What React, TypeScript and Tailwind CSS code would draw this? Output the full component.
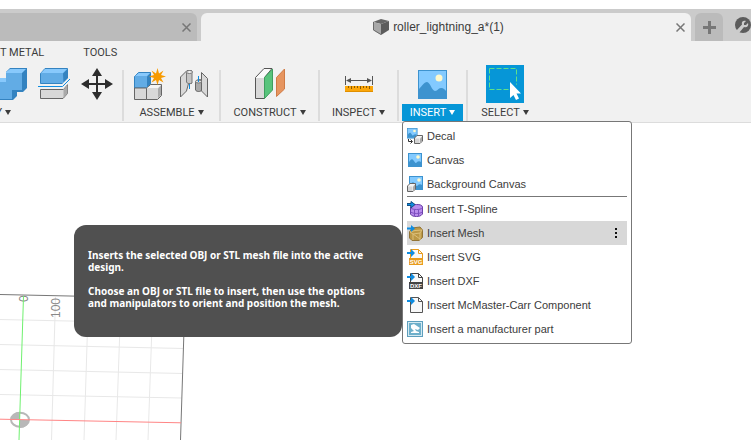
import type { ReactNode } from 'react';
import { clsx } from 'clsx';

type IconProps = { className?: string };

function PictureIcon({ className }: IconProps) {
  return (
    <svg className={className} viewBox="0 0 29 29" fill="none">
      <rect x="0.5" y="0.5" width="28" height="28" fill="#83caff" stroke="#3d93cf" />
      <circle cx="21" cy="8" r="3.5" fill="#fdf9cd" />
      <path d="M1 19C4 16 6 12 9 12s5 9 8 9 3-3 6-3 4 2 5 3v7H1z" fill="#3d93cf" />
    </svg>
  );
}

function CombineIcon() {
  return (
    <svg className="h-8 w-7" viewBox="0 0 28 32">
      <path d="M0 14V10H6V4L10 0H27V20L23 24H17V28L13 32H0z" fill="#3483c0" />
      <path d="M0 14H6V5H22V22H12V31H0z" fill="#62ace5" />
      <path d="M6 4L10 1H26L22 5H6zM0 10H6V14H0z" fill="#88c9fc" />
    </svg>
  );
}

function SplitIcon() {
  return (
    <svg className="size-8" viewBox="0 0 32 32" fill="none">
      <path d="M2.500 5.500L7 .500H29.500V11L26 15.500H2.500z" fill="#62ace5" stroke="#3483c0" />
      <path d="M3 5L7 1H29L25 5z" fill="#88c9fc" />
      <path d="M25 5.500L29.500 1V11L25.500 15.500z" fill="#3483c0" />
      <path d="M2.500 21.500H25.500L29.500 16.500V25.500L25 30.500H2.500z" fill="#d8d8d8" stroke="#666" />
      <path d="M25.500 21.500L29.500 17V25.500L25.500 30z" fill="#aaa" />
      <path d="M0 18.500H24.500L32 11" stroke="#f1f1f1" strokeWidth="4" />
      <path d="M0 18.500H24.500L32 11" stroke="#0f8ce0" />
    </svg>
  );
}

function MoveIcon() {
  return (
    <svg className="h-8 w-[34px]" viewBox="0 0 32 32" fill="#2d2d2d">
      <path d="M15 6h2v9h9v2h-9v9h-2v-9H6v-2h9z" />
      <path d="M16 0L21 8H11zM16 32L11 24H21zM0 16L8 11V21zM32 16L24 21V11z" />
    </svg>
  );
}

function NewComponentIcon() {
  return (
    <svg className="size-8" viewBox="0 0 32 32" fill="none">
      <path d="M.5 8.500L4.500 4.500H16.500V16L12.500 20H.5z" fill="#62ace5" stroke="#3483c0" />
      <path d="M1 8L5 5H16L13 8z" fill="#88c9fc" />
      <path d="M13 8.500L16.500 5V16L13 19.500z" fill="#3483c0" />
      <path d="M.5 20H12.500V31.500H.5z" fill="#d8d8d8" stroke="#666" />
      <path d="M12.500 20.500L16.500 16.500H27.500V27.500L23.500 31.500H12.500z" fill="#d8d8d8" stroke="#666" />
      <path d="M13 20L17 17H27L24 20z" fill="#f5f5f5" />
      <path d="M24 20.500L27 17.500V27L24 30z" fill="#aaa" />
      <path
        d="M23.500 0L25 5.500L29.500 2.500L27 7L32 8.500L27 10L29.500 14.500L25 12L23.500 17L22 12L17.500 14.500L20 10L15 8.500L20 7L17.500 2.500L22 5.500z"
        fill="#f79a00"
      />
    </svg>
  );
}

function JointIcon() {
  return (
    <svg className="size-8" viewBox="0 0 32 32" fill="none" stroke="#666">
      <path d="M2.500 9L9 2.500H13.500V15.500H10.500L8.500 23L2.500 29z" fill="#d8d8d8" />
      <path d="M8.500 5V14C9 16 12.500 16 14 15V4C14 2 9 2 8.500 5z" fill="#c4c4c4" stroke="#777" />
      <ellipse cx="11.500" cy="4" rx="3" ry="1.500" fill="#f1f1f1" stroke="#777" />
      <path d="M23.500 4.500L29.500 10.500V29L23.500 23z" fill="#d8d8d8" />
      <path d="M17.500 14V22C18.500 24 23 24 23.500 22V12C21 11 18.500 12 17.500 14z" fill="#aaa" />
      <ellipse cx="20.500" cy="13.500" rx="3" ry="1.500" fill="#ddd" stroke="#777" />
      <path d="M11.500 16V21M20.500 8V14" stroke="#0f8ce0" />
    </svg>
  );
}

function PlaneIcon() {
  return (
    <svg className="size-8" viewBox="0 0 32 32" fill="none">
      <path d="M1.500 9.500L10 .500H18L10.500 9.500V30.500H1.500z" fill="#fafafa" stroke="#555" />
      <path d="M2 10H10V30H2z" fill="#d8d8d8" />
      <path d="M10.500 9.500L18.500 1V22L10.500 30.500z" fill="#58c47c" stroke="#3f9e5f" />
      <path d="M22.500 9.500L30.500 1V21L22.500 28.500z" fill="#e69560" stroke="#d07b45" />
    </svg>
  );
}

function MeasureIcon() {
  return (
    <svg className="size-8" viewBox="0 0 32 32" fill="none">
      <path d="M2.500 8V17M29.500 8V17M4 12.500H28" stroke="#555" />
      <path d="M3 12.500L8 10V15zM29 12.500L24 10V15z" fill="#555" />
      <rect x="2" y="18" width="28" height="6" fill="#fba60a" />
      <path d="M5.500 18v2M8.500 18v3M11.500 18v2M14.500 18v2M17.500 18v3M20.500 18v2M23.500 18v2M26.500 18v3" stroke="#8a5a00" />
      <path d="M2 23.500H30" stroke="#e08f00" />
    </svg>
  );
}

function SelectIcon() {
  return (
    <svg className="size-[38px] bg-[#0696d7]" viewBox="0 0 38 38" fill="none">
      <rect x="3.500" y="3.500" width="27" height="21" stroke="#5fe08a" strokeDasharray="5 2" />
      <path d="M23 15V35H36V27L27 15z" fill="#0696d7" />
      <path d="M24 17V33L27.500 30L30 35L33 33.500L30.500 28.500H35z" fill="#fff" />
    </svg>
  );
}

function CubeIcon() {
  return (
    <svg className="size-4" viewBox="0 0 16 16">
      <path d="M0 3L8 0L16 2L8 5z" fill="#666" />
      <path d="M0 3L8 5V16L0 11z" fill="#a8a8a8" />
      <path d="M8 5L16 2V11L8 16z" fill="#5c5c5c" />
      <path d="M.5 3V11L8 15.500" stroke="#6a6a6a" fill="none" />
    </svg>
  );
}

function WrenchIcon() {
  return (
    <svg className="size-4" viewBox="0 0 16 16">
      <circle cx="8" cy="8" r="8" fill="#5c5c5c" />
      <path
        d="M1 14L7 7.500C6 4.500 8.500 3 11 4L9 6V8H11L13 6C14 9 12 11 9 10L4 16z"
        fill="#cbcbcb"
      />
    </svg>
  );
}

function CloseIcon() {
  return (
    <svg className="size-[9px]" viewBox="0 0 9 9" stroke="#777" strokeWidth="1.500">
      <path d="M.5 .5L8.500 8.500M8.500 .5L.5 8.500" />
    </svg>
  );
}

function MiniPicture() {
  return (
    <>
      <rect x="0.500" y="0.500" width="13" height="13" fill="#83caff" stroke="#3d93cf" />
      <circle cx="10" cy="4" r="1.800" fill="#fdf9cd" />
      <path d="M1 9C3 6 4 5 6 8S8 10 9 9s3-1 4 0v4H1z" fill="#3d93cf" />
    </>
  );
}

function SmallCube() {
  return (
    <>
      <path d="M.5 3L3 .5H8.500V6L6 8.500H.5z" fill="#f5f5f5" stroke="#666" />
      <path d="M1 3.500H5.500V8H1z" fill="#d4d4d4" />
      <path d="M6 3.500L8 1.500V6L6 8z" fill="#aaa" />
    </>
  );
}

function BlueArrow() {
  return <path d="M0 3H4V0L8 4L4 8V5H0z" fill="#0f8ce0" />;
}

function MenuIcon({ children }: { children: ReactNode }) {
  return (
    <svg className="size-4 shrink-0" viewBox="0 0 16 16" fill="none">
      {children}
    </svg>
  );
}

function FileShape({ color = '#555' }: { color?: string }) {
  return (
    <>
      <path d="M3.500 .5H11.500L15.500 4.500V15.500H3.500z" fill="#f8f8f8" stroke={color} />
      <path d="M11.500 .5V4.500H15.500" stroke={color} />
    </>
  );
}

function FileTag({ color, label }: { color: string; label: string }) {
  return (
    <>
      <FileShape color={color} />
      <rect x="2" y="9" width="14" height="7" fill={color} />
      <text x="9" y="15" fontSize="6" fontWeight="bold" textAnchor="middle" fill="#fff" fontFamily="Liberation Sans, sans-serif">
        {label}
      </text>
      <BlueArrow />
    </>
  );
}

const menuItems: { label: string; icon: ReactNode }[] = [
  {
    label: 'Decal',
    icon: (
      <>
        <g transform="scale(.75)"><MiniPicture /></g>
        <g transform="translate(7 7)"><SmallCube /></g>
        <path d="M1.500 11V13.500H5M3.500 11.500L5.500 13.500L3.500 15.500" stroke="#333" />
      </>
    ),
  },
  { label: 'Canvas', icon: <g transform="translate(1 1)"><MiniPicture /></g> },
  {
    label: 'Background Canvas',
    icon: (
      <>
        <g transform="translate(2 0)"><MiniPicture /></g>
        <g transform="translate(0 7)"><SmallCube /></g>
      </>
    ),
  },
  {
    label: 'Insert T-Spline',
    icon: (
      <>
        <path d="M3.500 6C4 4 6 3.500 9.500 3.500S15 4 15.500 6V13C14 15 12 15.500 9.500 15.500S4.500 15 3.500 13z" fill="#b98cec" stroke="#6a3fa5" />
        <path d="M3.500 7C6 9 13 9 15.500 7M3.500 11C6 13 13 13 15.500 11M7.500 8.500V15M11.500 8.500V15" stroke="#7d4fc0" />
        <path d="M0 2.500H4V.5L8 3.500L4 7V4.500H0z" fill="#0f8ce0" stroke="#174f80" />
      </>
    ),
  },
  {
    label: 'Insert Mesh',
    icon: (
      <>
        <path d="M2.500 7L5 3L13 2L15.500 5V12.500L12 15.500H5L2.500 13z" fill="#bb9846" stroke="#927436" />
        <path d="M3 7L8 5.500L15 5M6 9L13 8L15 5M6 9V15M13 8V15M6 9L13 14M3 7L6 9" stroke="#dcc07a" />
        <path d="M0 2.500H4V0L8 3.500L4 7V4.500H0z" fill="#0f8ce0" />
      </>
    ),
  },
  { label: 'Insert SVG', icon: <FileTag color="#e89b1c" label="SVG" /> },
  { label: 'Insert DXF', icon: <FileTag color="#444" label="DXF" /> },
  { label: 'Insert McMaster-Carr Component', icon: <><FileShape /><BlueArrow /></> },
  {
    label: 'Insert a manufacturer part',
    icon: (
      <>
        <rect x="0.500" y="0.500" width="15" height="15" fill="#d5eaf2" stroke="#5e9fbd" />
        <rect x="2" y="2" width="12" height="12" fill="#6fb0cb" />
        <path d="M4 4L7 3L13 7L11 9L8 8L9 10L12 11V12H4V11L7 10L4 7z" fill="#fff" />
      </>
    ),
  },
];

function Caret() {
  return (
    <svg className="h-[5px] w-1.5 shrink-0" viewBox="0 0 6 5" fill="currentColor">
      <path d="M0 0H6L3 5z" />
    </svg>
  );
}

function ToolGroup({ label, active, className, children, menu }: {
  label: string;
  active?: boolean;
  className?: string;
  children: ReactNode;
  menu?: ReactNode;
}) {
  return (
    <div className={clsx('flex shrink-0 flex-col items-center gap-px', className)}>
      <div className="flex h-[38px] items-center justify-center gap-3">{children}</div>
      <div className="relative">
        <button
          className={clsx(
            'flex h-[17px] items-center justify-center gap-[3px] whitespace-nowrap',
            active && 'w-[61px] bg-[#0696d7] text-white'
          )}
        >
          <span className="pt-0.5">{label}</span>
          <Caret />
        </button>
        {menu}
      </div>
    </div>
  );
}

function Divider() {
  return <div className="h-[51px] w-0.5 shrink-0 self-end bg-[#dcdcdc]" />;
}

function Tooltip() {
  return (
    <div
      role="tooltip"
      className="absolute right-full top-[103px] mr-px flex h-28 w-[328px] flex-col justify-center gap-3 rounded-xl bg-[#505050] pb-1 pl-3.5 pr-6 font-['Noto_Sans',sans-serif] text-[10px] font-bold leading-3 text-white"
    >
      <p>Inserts the selected OBJ or STL mesh file into the active design.</p>
      <p>Choose an OBJ or STL file to insert, then use the options and manipulators to orient and position the mesh.</p>
    </div>
  );
}

function InsertMenu() {
  return (
    <div className="absolute left-0 top-full z-10 w-[230px] rounded-[3px] border border-[#777] bg-white px-1 py-0.5 font-['Liberation_Sans',Arial,sans-serif] text-[#3c3c3c]">
      <ul>
        {menuItems.map(({ label, icon }, i) => (
          <li key={label} className={clsx(i === 3 && 'border-t border-[#777]')}>
            <button
              className={clsx(
                'flex h-6 w-full items-center gap-1 whitespace-nowrap text-left',
                label === 'Insert Mesh' && 'bg-[#d8d8d8]'
              )}
            >
              <MenuIcon>{icon}</MenuIcon>
              <span className="grow">{label}</span>
              {label === 'Insert Mesh' && (
                <svg className="mr-2.5 h-3 w-0.5" viewBox="0 0 2 12" fill="#111">
                  <path d="M0 1h2v2H0zM0 5h2v2H0zM0 9h2v2H0z" />
                </svg>
              )}
            </button>
          </li>
        ))}
      </ul>
      <Tooltip />
    </div>
  );
}

function Viewport() {
  return (
    <svg className="h-[317px] w-[200px]" viewBox="0 123 200 317" fill="none">
      <g stroke="#e8e8e8">
        <path d="M0 319.500L184 323.500M0 344.500L183.500 348.500M0 369.500L182.500 373.500M0 394.500L181.500 398" />
        <path d="M55.500 297L51.500 440M88.500 297L84 440M121 297L116 440M153 297L148 440" />
      </g>
      <path d="M0 294.500L185 298.500L180.500 440" stroke="#777" />
      <g fill="#888" fontFamily="Liberation Sans, sans-serif" fontSize="12">
        <text transform="translate(28 302) rotate(-90)">0</text>
        <text transform="translate(60 318) rotate(-90)">100</text>
      </g>
      <ellipse cx="20" cy="419.700" rx="9" ry="7" fill="#fff" stroke="#b8b8b8" strokeWidth="2" />
      <path d="M20 420V412A9 8 0 0 0 11 420zM20 420V428A9 8 0 0 0 29 420z" fill="#b8b8b8" />
      <path d="M23.500 296L19 440" stroke="#6ff06f" />
      <path d="M0 419.200L181 422.800" stroke="#ff8585" />
    </svg>
  );
}

export default function App() {
  return (
    <div className="min-h-screen overflow-hidden bg-white pt-[9px] font-['Liberation_Sans',Arial,sans-serif] text-[11px] text-[#3c3c3c]">
      <header className="flex h-8 gap-1 bg-[#cbcbcb] pt-1">
        <div className="flex w-[197px] items-center justify-end rounded-tr-md bg-[#bbb] pr-1.5">
          <button aria-label="Close tab"><CloseIcon /></button>
        </div>
        <div className="flex grow items-center rounded-t-md bg-[#f1f1f1] pr-1.5">
          <div className="flex grow items-center justify-center gap-1 text-xs">
            <CubeIcon />
            <span>roller_lightning_a*(1)</span>
          </div>
          <button aria-label="Close document"><CloseIcon /></button>
        </div>
        <button aria-label="New tab" className="flex w-7 items-center justify-center rounded-t-md bg-[#bbb]">
          <svg className="size-[13px]" viewBox="0 0 13 13" fill="#777">
            <path d="M5 0H8V5H13V8H8V13H5V8H0V5H5z" />
          </svg>
        </button>
        <button aria-label="Extensions" className="pb-1 pl-2"><WrenchIcon /></button>
      </header>

      <div className="border-b border-[#dcdcdc] bg-[#f1f1f1] pb-px font-[Roboto,sans-serif]">
        <nav className="flex h-6 items-center gap-[39px]">
          <button className="whitespace-nowrap">T METAL</button>
          <button>TOOLS</button>
        </nav>
        <div className="flex">
          <div className="flex w-[122px] shrink-0 flex-col gap-px">
            <div className="flex h-[38px] items-center gap-2.5">
              <CombineIcon />
              <SplitIcon />
              <MoveIcon />
            </div>
            <button className="flex h-[17px] w-[11px] items-center justify-end gap-[3px]" aria-label="Modify">
              <span className="pt-0.5">Y</span>
              <Caret />
            </button>
          </div>
          <Divider />
          <ToolGroup label="ASSEMBLE" className="w-[95px]">
            <NewComponentIcon />
            <JointIcon />
          </ToolGroup>
          <Divider />
          <ToolGroup label="CONSTRUCT" className="w-[97px]"><PlaneIcon /></ToolGroup>
          <Divider />
          <ToolGroup label="INSPECT" className="w-[77px]"><MeasureIcon /></ToolGroup>
          <Divider />
          <ToolGroup label="INSERT" active className="w-[67px]" menu={<InsertMenu />}>
            <PictureIcon className="size-[29px]" />
          </ToolGroup>
          <Divider />
          <ToolGroup label="SELECT" className="w-[74px]"><SelectIcon /></ToolGroup>
        </div>
      </div>

      <main>
        <Viewport />
      </main>
    </div>
  );
}
